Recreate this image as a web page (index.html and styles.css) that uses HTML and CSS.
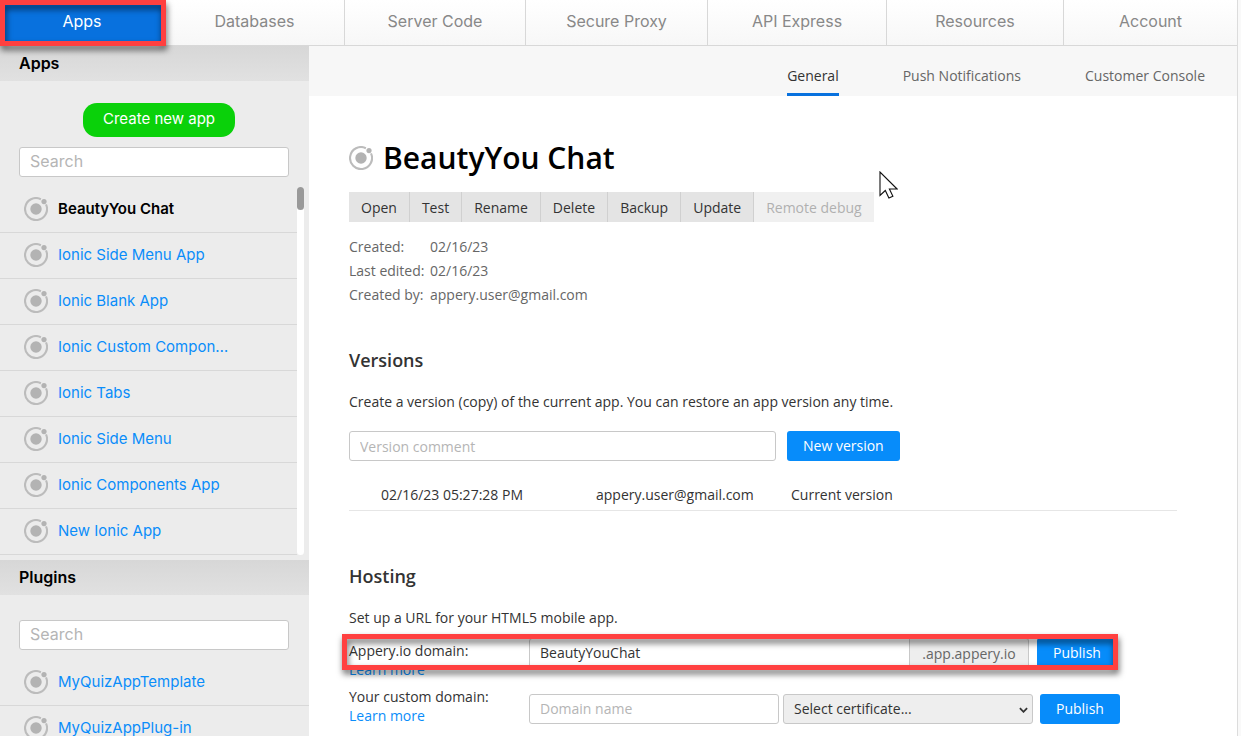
FILE: index.html
```
<!DOCTYPE html>
<html lang="en">
<head>
    <meta charset="UTF-8">
    <meta name="viewport" content="width=device-width, initial-scale=1.0">
    <title>BeautyYou Chat</title>
    <link rel="stylesheet" href="styles.css">
</head>
<body>
    <svg class="defs" width="0" height="0" aria-hidden="true">
        <symbol id="ionic" viewBox="0 0 24 24">
            <path d="M16.9 2.2A11 11 0 1 0 22 7.4" fill="none" stroke="#bcbcbc" stroke-width="2.1"/>
            <circle cx="12" cy="12" r="5.7" fill="#b3b3b3"/>
            <circle cx="20" cy="4.6" r="2.6" fill="#b3b3b3"/>
        </symbol>
    </svg>

    <div class="page">
        <nav class="nav">
            <a href="#" class="nav-item active">Apps</a>
            <a href="#" class="nav-item">Databases</a>
            <a href="#" class="nav-item">Server Code</a>
            <a href="#" class="nav-item">Secure Proxy</a>
            <a href="#" class="nav-item">API Express</a>
            <a href="#" class="nav-item">Resources</a>
            <a href="#" class="nav-item">Account</a>
            <div class="marker marker-nav"></div>
        </nav>

        <div class="columns">
            <aside class="sidebar">
                <h2 class="side-title">Apps</h2>
                <div class="side-tools">
                    <button class="create">Create new app</button>
                    <input class="search" type="text" placeholder="Search" aria-label="Search apps">
                </div>
                <div class="scroll-box">
                    <ul class="app-list">
                        <li><a href="#" class="current"><svg class="icon"><use href="#ionic"/></svg>BeautyYou Chat</a></li>
                        <li><a href="#"><svg class="icon"><use href="#ionic"/></svg>Ionic Side Menu App</a></li>
                        <li><a href="#"><svg class="icon"><use href="#ionic"/></svg>Ionic Blank App</a></li>
                        <li><a href="#"><svg class="icon"><use href="#ionic"/></svg>Ionic Custom Compon…</a></li>
                        <li><a href="#"><svg class="icon"><use href="#ionic"/></svg>Ionic Tabs</a></li>
                        <li><a href="#"><svg class="icon"><use href="#ionic"/></svg>Ionic Side Menu</a></li>
                        <li><a href="#"><svg class="icon"><use href="#ionic"/></svg>Ionic Components App</a></li>
                        <li><a href="#"><svg class="icon"><use href="#ionic"/></svg>New Ionic App</a></li>
                    </ul>
                    <div class="track"><div class="thumb"></div></div>
                </div>
                <h2 class="side-title">Plugins</h2>
                <div class="side-tools plugins">
                    <input class="search" type="text" placeholder="Search" aria-label="Search plugins">
                </div>
                <ul class="app-list">
                    <li><a href="#"><svg class="icon"><use href="#ionic"/></svg>MyQuizAppTemplate</a></li>
                    <li><a href="#"><svg class="icon"><use href="#ionic"/></svg>MyQuizAppPlug-in</a></li>
                </ul>
            </aside>

            <main class="main">
                <div class="tabs">
                    <a href="#" class="tab active">General</a>
                    <a href="#" class="tab">Push Notifications</a>
                    <a href="#" class="tab">Customer Console</a>
                </div>

                <div class="content">
                    <h1 class="app-name"><svg class="icon"><use href="#ionic"/></svg>BeautyYou Chat</h1>
                    <div class="toolbar">
                        <button>Open</button>
                        <button>Test</button>
                        <button>Rename</button>
                        <button>Delete</button>
                        <button>Backup</button>
                        <button>Update</button>
                        <button disabled>Remote debug</button>
                    </div>
                    <dl class="info">
                        <dt>Created:</dt><dd>02/16/23</dd>
                        <dt>Last edited:</dt><dd>02/16/23</dd>
                        <dt>Created by:</dt><dd>appery.user@gmail.com</dd>
                    </dl>

                    <section class="versions">
                        <h3>Versions</h3>
                        <p>Create a version (copy) of the current app. You can restore an app version any time.</p>
                        <div class="version-form">
                            <input class="field" type="text" placeholder="Version comment" aria-label="Version comment">
                            <button class="blue">New version</button>
                        </div>
                        <table class="version-table">
                            <tr>
                                <td class="date">02/16/23 05:27:28 PM</td>
                                <td class="author">appery.user@gmail.com</td>
                                <td>Current version</td>
                            </tr>
                        </table>
                    </section>

                    <section class="hosting">
                        <h3>Hosting</h3>
                        <p>Set up a URL for your HTML5 mobile app.</p>
                        <div class="host-row">
                            <div class="host-label">
                                <label for="domain">Appery.io domain:</label>
                                <a href="#">Learn more</a>
                            </div>
                            <div class="host-controls">
                                <div class="group">
                                    <input class="field" id="domain" type="text" value="BeautyYouChat">
                                    <span class="suffix">.app.appery.io</span>
                                </div>
                                <button class="blue">Publish</button>
                            </div>
                            <div class="marker marker-host"></div>
                        </div>
                        <div class="host-row custom">
                            <div class="host-label">
                                <label for="custom">Your custom domain:</label>
                                <a href="#">Learn more</a>
                            </div>
                            <div class="host-controls">
                                <input class="field" id="custom" type="text" placeholder="Domain name">
                                <div class="select-box">
                                    <select aria-label="Certificate">
                                        <option>Select certificate...</option>
                                    </select>
                                    <svg class="arrow" viewBox="0 0 10 6"><path d="M1 1l4 4 4-4" fill="none" stroke="#333" stroke-width="2"/></svg>
                                </div>
                                <button class="blue">Publish</button>
                            </div>
                        </div>
                    </section>
                </div>
            </main>
        </div>
    </div>

    <svg class="cursor" viewBox="0 0 19 28"><path d="M1 1v23.5l5.3-5 3.6 7.6 4-1.8-3.5-7.3h7.7z" fill="#fff" stroke="#111" stroke-width="1.1"/></svg>
</body>
</html>
```
FILE: styles.css
```
* {
    box-sizing: border-box;
}
body {
    margin: 0;
    height: 100vh;
    overflow: hidden;
    background: #f9f9f9;
    color: #333;
    font-family: "Open Sans", "Liberation Sans", sans-serif;
    font-size: 14px;
    line-height: 20px;
}
h1, h2, h3, p, ul, dl, dd {
    margin: 0;
    padding: 0;
}
ul {
    list-style: none;
}
a {
    color: #0a8dfa;
    text-decoration: none;
}
button, input, select {
    font: inherit;
    margin: 0;
}
button {
    border: none;
    cursor: pointer;
}
.defs {
    position: absolute;
}
.page {
    min-height: 100vh;
    margin-right: 3px;
    border-right: 1px solid #dcdcdc;
    background: #fff;
}

/* top navigation */
.nav {
    position: relative;
    display: grid;
    grid-template-columns: 165fr 180fr 181fr 182fr 179fr 177fr 173fr;
    height: 46px;
    border-bottom: 1px solid #d8d8d8;
    background: linear-gradient(#fff, #f7f7f7);
    font-family: Inter, "Liberation Sans", sans-serif;
    font-size: 16px;
}
.nav-item {
    border-right: 1px solid #d8d8d8;
    color: #888;
    line-height: 43px;
    text-align: center;
}
.nav-item:nth-last-child(2) {
    border-right: none;
}
.nav-item.active {
    background: #0871de;
    color: #fff;
}

/* red call-out frames */
.marker {
    position: absolute;
    border: 5px solid #ff4040;
    filter: drop-shadow(1px 4px 3px rgba(0, 0, 0, .6));
    pointer-events: none;
}
.marker-nav {
    top: 0;
    left: 0;
    width: 166px;
    height: 46px;
}
.marker-host {
    top: -4px;
    left: -7px;
    width: 776px;
    height: 36px;
}

.columns {
    display: flex;
}

/* sidebar */
.sidebar {
    flex: 0 0 309px;
    height: calc(100vh - 46px);
    overflow: hidden;
    background: #ececec;
    font-family: Inter, "Liberation Sans", sans-serif;
    font-size: 15px;
}
.side-title {
    height: 35px;
    padding-left: 19px;
    background: linear-gradient(#d7d7d7, #e1e1e1);
    color: #000;
    font-size: 16px;
    font-weight: 600;
    line-height: 35px;
}
.side-tools {
    display: flex;
    flex-direction: column;
    align-items: center;
    gap: 10px;
    padding: 22px 20px 10px 19px;
}
.side-tools.plugins {
    padding-top: 25px;
}
.create {
    height: 34px;
    margin-left: 10px;
    padding: 0 20px 2px;
    border-radius: 14px;
    background: #0ad10a;
    color: #fff;
}
.search {
    width: 100%;
    height: 30px;
    padding: 0 10px 2px;
    border: 1px solid #c8c8c8;
    border-radius: 3px;
    background: #fff;
    font-size: 16px;
}
::placeholder {
    color: #b5b5b5;
    opacity: 1;
}
.scroll-box {
    display: flex;
    padding: 0 5px 5px 0;
}
.scroll-box .app-list {
    flex: 1;
}
.app-list a {
    display: flex;
    align-items: center;
    gap: 10px;
    height: 46px;
    padding: 0 0 1px 24px;
    border-bottom: 1px solid #d8d8d8;
}
.app-list .current {
    color: #000;
    font-weight: 600;
}
.icon {
    flex: none;
    width: 24px;
    height: 24px;
}
.track {
    width: 7px;
    border-radius: 4px;
    background: #fff;
}
.thumb {
    height: 23px;
    border-radius: 4px;
    background: #999;
}

/* main column */
.main {
    flex: 1;
    min-width: 0;
}
.tabs {
    display: flex;
    justify-content: flex-end;
    gap: 64px;
    height: 50px;
    padding-right: 32px;
    background: #f7f7f7;
}
.tab {
    color: #666;
    line-height: 60px;
}
.tab.active {
    border-bottom: 3px solid #0871de;
    color: #333;
}
.content {
    padding: 42px 60px 0 40px;
}
.app-name {
    display: flex;
    align-items: center;
    gap: 10px;
    color: #000;
    font-size: 30px;
    font-weight: 600;
    line-height: 40px;
}
.toolbar {
    display: flex;
    margin: 14px 0 13px;
}
.toolbar button {
    height: 30px;
    padding: 2px 12px 0;
    border-right: 1px solid #d0d0d0;
    background: #e4e4e4;
    color: #333;
}
.toolbar button:disabled {
    border: none;
    background: #f0f0f0;
    color: #b0b0b0;
}
.info {
    display: grid;
    grid-template-columns: 81px 1fr;
    color: #666;
    line-height: 24px;
}
h3 {
    font-size: 18px;
    font-weight: 600;
    line-height: 24px;
}
.versions {
    margin-top: 41px;
}
.versions p {
    margin: 20px 0 19px;
}
.version-form {
    display: flex;
    gap: 11px;
}
.field {
    height: 30px;
    padding: 0 10px;
    border: 1px solid #c8c8c8;
    border-radius: 3px;
    background: #fff;
    color: #333;
}
.version-form .field {
    width: 427px;
}
.blue {
    height: 30px;
    padding: 0 16px;
    border-radius: 3px;
    background: #078cfa;
    color: #fff;
}
.version-table {
    width: 100%;
    margin-top: 20px;
    border-collapse: collapse;
    border-bottom: 1px solid #e6e6e6;
}
.version-table td {
    height: 29px;
    padding: 0;
}
.version-table .date {
    width: 247px;
    padding-left: 32px;
}
.version-table .author {
    width: 195px;
}
.hosting {
    margin-top: 53px;
}
.hosting p {
    margin: 20px 0 10px;
}
.host-row {
    position: relative;
    display: flex;
    height: 49px;
}
.host-label {
    display: flex;
    flex-direction: column;
    width: 180px;
    padding-top: 3px;
    line-height: 19px;
}
.host-controls {
    display: flex;
    gap: 8px;
    height: 30px;
}
.group {
    display: flex;
    width: 500px;
}
.group .field {
    flex: 1;
    border-radius: 3px 0 0 3px;
}
.suffix {
    width: 119px;
    border: 1px solid #c8c8c8;
    border-left: none;
    border-radius: 0 3px 3px 0;
    background: #eee;
    color: #666;
    line-height: 30px;
    text-align: center;
}
.custom .host-label {
    padding-top: 0;
}
.custom .host-controls {
    gap: 4px;
    margin-top: 7px;
}
.custom .field {
    width: 250px;
}
.select-box {
    position: relative;
    width: 250px;
    margin-right: 3px;
}
select {
    width: 100%;
    height: 30px;
    padding: 0 10px;
    border: 1px solid #c8c8c8;
    border-radius: 3px;
    background: #eee;
    color: #333;
    appearance: none;
}
.arrow {
    position: absolute;
    top: 13px;
    right: 5px;
    width: 9px;
    height: 6px;
}

.cursor {
    position: absolute;
    top: 171px;
    left: 879px;
    width: 19px;
    height: 28px;
}
```
